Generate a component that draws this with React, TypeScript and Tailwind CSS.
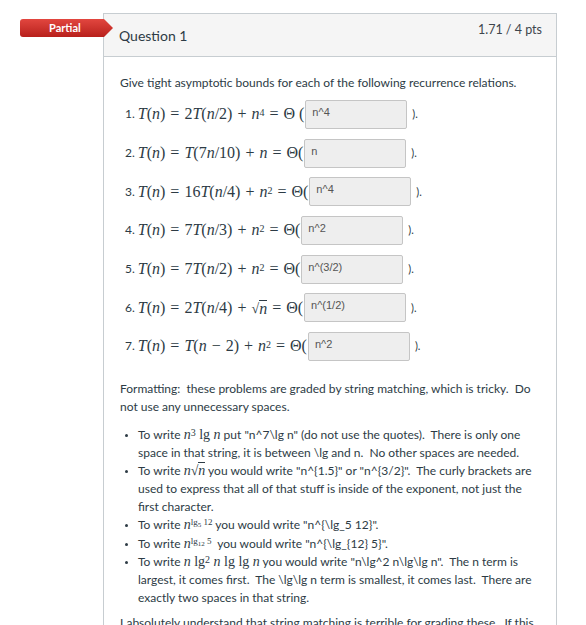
import React from "react"

const answers = [
  { label: "1.", value: "n^4" },
  { label: "2.", value: "n" },
  { label: "3.", value: "n^4" },
  { label: "4.", value: "n^2" },
  { label: "5.", value: "n^(3/2)" },
  { label: "6.", value: "n^(1/2)" },
  { label: "7.", value: "n^2" },
]

function V({ children }: { children: React.ReactNode }) {
  return <span className="italic">{children}</span>
}

function Op({ children }: { children: React.ReactNode }) {
  return <span className="mx-[5px]">{children}</span>
}

function Sup({ children }: { children: React.ReactNode }) {
  return <sup className="text-[10px] relative -top-[3px]">{children}</sup>
}

function Sqrt({ children }: { children: React.ReactNode }) {
  return (
    <span className="inline-flex items-end">
      <span className="text-[14px] leading-none">√</span>
      <span className="border-t border-current leading-[15px]">{children}</span>
    </span>
  )
}

const equations: React.ReactNode[] = [
  <>
    <V>T</V>(<V>n</V>)<Op>=</Op>2<V>T</V>(<V>n</V>/2)<Op>+</Op><V>n</V>
    <Sup>4</Sup>
    <Op>=</Op>Θ (
  </>,
  <>
    <V>T</V>(<V>n</V>)<Op>=</Op><V>T</V>(7<V>n</V>/10)<Op>+</Op><V>n</V>
    <Op>=</Op>Θ(
  </>,
  <>
    <V>T</V>(<V>n</V>)<Op>=</Op>16<V>T</V>(<V>n</V>/4)<Op>+</Op><V>n</V>
    <Sup>2</Sup>
    <Op>=</Op>Θ(
  </>,
  <>
    <V>T</V>(<V>n</V>)<Op>=</Op>7<V>T</V>(<V>n</V>/3)<Op>+</Op><V>n</V>
    <Sup>2</Sup>
    <Op>=</Op>Θ(
  </>,
  <>
    <V>T</V>(<V>n</V>)<Op>=</Op>7<V>T</V>(<V>n</V>/2)<Op>+</Op><V>n</V>
    <Sup>2</Sup>
    <Op>=</Op>Θ(
  </>,
  <>
    <V>T</V>(<V>n</V>)<Op>=</Op>2<V>T</V>(<V>n</V>/4)<Op>+</Op>
    <Sqrt>
      <V>n</V>
    </Sqrt>
    <Op>=</Op>Θ(
  </>,
  <>
    <V>T</V>(<V>n</V>)<Op>=</Op><V>T</V>(<V>n</V>
    <Op>−</Op>2)<Op>+</Op><V>n</V>
    <Sup>2</Sup>
    <Op>=</Op>Θ(
  </>,
]

function M({ children }: { children: React.ReactNode }) {
  return <span className="font-['Liberation_Serif',serif] text-[14px] leading-[14px]">{children}</span>
}

function Bullet({ children }: { children: React.ReactNode }) {
  return (
    <li className="flex">
      <span className="w-[18px] shrink-0 pl-[5px] pt-[8px]">
        <span className="block w-[3px] h-[3px] rounded-full bg-[#2d3b45]" />
      </span>
      <div>{children}</div>
    </li>
  )
}

export default function App() {
  return (
    <div className="relative w-[586px] h-[625px] overflow-hidden bg-white text-[#2d3b45] font-['Lato',sans-serif]">
      <div className="ml-[103px] mt-[13px] w-[454px] border border-[#c7cdd1]">
        {/* header */}
        <div className="h-[43px] bg-[#f5f5f5] border-b border-[#c7cdd1] flex justify-between pl-[15px] pr-[14px]">
          <h2 className="text-[14px] self-center">Question 1</h2>
          <span className="text-[12.5px] text-[#3d454c] pt-[7px]">1.71 / 4 pts</span>
        </div>

        {/* body */}
        <div className="px-4 pt-[16px] text-[12px] leading-[18px]">
          <p className="leading-[19px]">Give tight asymptotic bounds for each of the following recurrence relations.</p>

          <div className="mt-[3px]">
            {answers.map((a, i) => (
              <div key={a.label} className="h-[38.7px] flex items-center pl-[5px]">
                <span className="text-[12px] mr-[3px]">{a.label}</span>
                <span className="font-['Liberation_Serif',serif] text-[16px] whitespace-nowrap">{equations[i]}</span>
                <div className="ml-[1px] w-[102px] h-[29px] bg-[#eeeeee] border border-[#c5c5c5] rounded-[2px] px-[6px] pt-[4px] text-[11px] leading-[14px] text-[#555] font-['Liberation_Sans',sans-serif]">
                  {a.value}
                </div>
                <span className="ml-[5px] text-[11px]">).</span>
              </div>
            ))}
          </div>

          <p className="mt-[14px]">
            Formatting:&nbsp; these problems are graded by string matching, which is tricky.&nbsp; Do not use any unnecessary spaces.
          </p>

          <ul className="mt-[10px]">
            <Bullet>
              To write{" "}
              <M>
                <V>n</V>
                <Sup>3</Sup> lg <V>n</V>
              </M>{" "}
              put "n^7\lg n" (do not use the quotes).&nbsp; There is only one space in that string, it is between \lg and n.&nbsp; No other spaces are needed.
            </Bullet>
            <Bullet>
              To write{" "}
              <M>
                <V>n</V>
                <Sqrt>
                  <V>n</V>
                </Sqrt>
              </M>{" "}
              you would write "n^{"{1.5}"}" or "n^{"{3/2}"}".&nbsp; The curly brackets are used to express that all of that stuff is inside of the exponent, not just the first character.
            </Bullet>
            <Bullet>
              To write{" "}
              <M>
                <V>n</V>
                <sup className="text-[9px] relative -top-[4px]">
                  lg<sub className="text-[7px]">5</sub> 12
                </sup>
              </M>{" "}
              you would write "n^{"{\\lg_5 12}"}".
            </Bullet>
            <div className="h-[1px]" />
            <Bullet>
              To write{" "}
              <M>
                <V>n</V>
                <sup className="text-[9px] relative -top-[4px]">
                  lg<sub className="text-[7px]">12</sub> 5
                </sup>
              </M>{" "}
              &nbsp;you would write "n^{"{\\lg_{12} 5}"}".
            </Bullet>
            <Bullet>
              To write{" "}
              <M>
                <V>n</V> lg<Sup>2</Sup> <V>n</V> lg lg <V>n</V>
              </M>{" "}
              you would write "n\lg^2 n\lg\lg n".&nbsp; The n term is largest, it comes first.&nbsp; The \lg\lg n term is smallest, it comes last.&nbsp; There are exactly two spaces in that string.
            </Bullet>
          </ul>

          <p className="mt-[7px]">
            I absolutely understand that string matching is terrible for grading these.&nbsp; If this is a problem for you, please let me know and I will regrade by hand.
          </p>
        </div>
      </div>

      {/* status badge */}
      <div className="absolute left-[20px] top-[19px] w-[93px] h-[18px] rounded-l-[3px] bg-gradient-to-b from-[#e2463f] to-[#b81f1b] [clip-path:polygon(0_0,84px_0,100%_50%,84px_100%,0_100%)] flex items-center pl-[29px]">
        <span className="text-white text-[11px] font-bold font-['Lato',sans-serif]">Partial</span>
      </div>
    </div>
  )
}
